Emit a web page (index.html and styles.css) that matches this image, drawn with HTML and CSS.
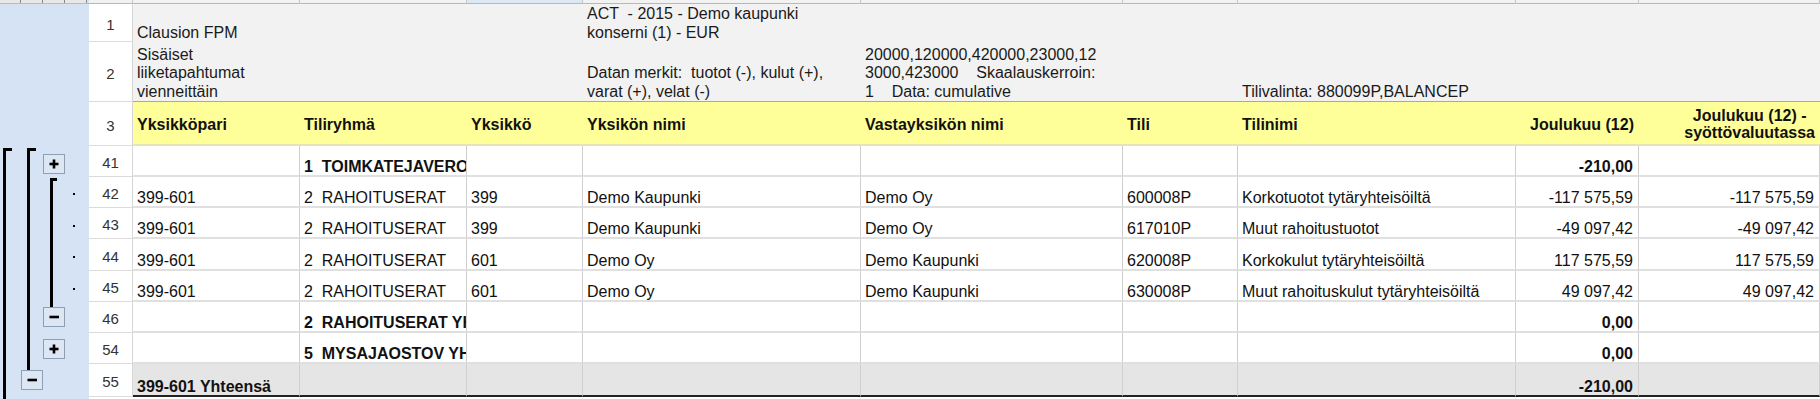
FILE: index.html
```html
<!DOCTYPE html>
<html lang="fi">
<head>
<meta charset="utf-8">
<title>Sisäiset liiketapahtumat</title>
<link rel="stylesheet" href="styles.css">
</head>
<body>
<div class="sheet">
  <div class="levels"><span></span><span></span><span></span><span></span></div>
  <div class="hd"></div><div class="hd"></div><div class="hd"></div><div class="hd sel"></div><div class="hd"></div><div class="hd"></div><div class="hd"></div><div class="hd"></div><div class="hd"></div><div class="hd"></div>

  <div class="outline">
    <svg width="89" height="395" viewBox="0 4 89 395" xmlns="http://www.w3.org/2000/svg">
      <g fill="#000">
        <rect x="3" y="148" width="3" height="251"/>
        <rect x="3" y="148" width="9" height="3"/>
        <rect x="27" y="148" width="3" height="222"/>
        <rect x="27" y="148" width="9" height="3"/>
        <rect x="50" y="178" width="3" height="129"/>
        <rect x="50" y="178" width="7" height="3"/>
        <rect x="73" y="193" width="2" height="2"/>
        <rect x="73" y="225" width="2" height="2"/>
        <rect x="73" y="256" width="2" height="2"/>
        <rect x="73" y="288" width="2" height="2"/>
      </g>
      <g fill="#dde7f4" stroke="#8e9eb5" stroke-width="1">
        <rect x="43.5" y="154.5" width="21" height="19"/>
        <rect x="43.5" y="307.5" width="21" height="19"/>
        <rect x="43.5" y="339.5" width="21" height="19"/>
        <rect x="21.5" y="370.5" width="21" height="19"/>
      </g>
      <g fill="#000">
        <rect x="49.5" y="162.7" width="9" height="2.6"/>
        <rect x="52.7" y="159.5" width="2.6" height="9"/>
        <rect x="49.5" y="315.7" width="9.5" height="2.6"/>
        <rect x="49.5" y="347.7" width="9" height="2.6"/>
        <rect x="52.7" y="344.5" width="2.6" height="9"/>
        <rect x="27.5" y="378.7" width="9.5" height="2.6"/>
      </g>
    </svg>
  </div>

  <!-- row 1 -->
  <div class="rn">1</div>
  <div class="c m">Clausion FPM</div>
  <div class="c m"></div>
  <div class="c m"></div>
  <div class="c m">ACT  - 2015 - Demo kaupunki<br>konserni (1) - EUR</div>
  <div class="c m"></div>
  <div class="c m"></div>
  <div class="c m"></div>
  <div class="c m"></div>
  <div class="c m"></div>

  <!-- row 2 -->
  <div class="rn">2</div>
  <div class="c m m2">Sisäiset<br>liiketapahtumat<br>vienneittäin</div>
  <div class="c m m2"></div>
  <div class="c m m2"></div>
  <div class="c m m2">Datan merkit:  tuotot (-), kulut (+),<br>varat (+), velat (-)</div>
  <div class="c m m2">20000,120000,420000,23000,12<br>3000,423000    Skaalauskerroin:<br>1    Data: cumulative</div>
  <div class="c m m2"></div>
  <div class="c m m2">Tilivalinta: 880099P,BALANCEP</div>
  <div class="c m m2"></div>
  <div class="c m m2"></div>

  <!-- row 3 -->
  <div class="rn">3</div>
  <div class="c h">Yksikköpari</div>
  <div class="c h">Tiliryhmä</div>
  <div class="c h">Yksikkö</div>
  <div class="c h">Yksikön nimi</div>
  <div class="c h">Vastayksikön nimi</div>
  <div class="c h">Tili</div>
  <div class="c h">Tilinimi</div>
  <div class="c h r">Joulukuu (12)</div>
  <div class="c h r"><span class="two">Joulukuu (12) -<br>syöttövaluutassa</span></div>

  <!-- row 41 -->
  <div class="rn">41</div>
  <div class="c"></div>
  <div class="c b">1  TOIMKATEJAVEROT YHTEENSÄ</div>
  <div class="c"></div>
  <div class="c"></div>
  <div class="c"></div>
  <div class="c"></div>
  <div class="c"></div>
  <div class="c r b">-210,00</div>
  <div class="c r"></div>

  <!-- row 42 -->
  <div class="rn">42</div>
  <div class="c">399-601</div>
  <div class="c">2  RAHOITUSERAT</div>
  <div class="c">399</div>
  <div class="c">Demo Kaupunki</div>
  <div class="c">Demo Oy</div>
  <div class="c">600008P</div>
  <div class="c">Korkotuotot tytäryhteisöiltä</div>
  <div class="c r">-117 575,59</div>
  <div class="c r">-117 575,59</div>

  <!-- row 43 -->
  <div class="rn">43</div>
  <div class="c">399-601</div>
  <div class="c">2  RAHOITUSERAT</div>
  <div class="c">399</div>
  <div class="c">Demo Kaupunki</div>
  <div class="c">Demo Oy</div>
  <div class="c">617010P</div>
  <div class="c">Muut rahoitustuotot</div>
  <div class="c r">-49 097,42</div>
  <div class="c r">-49 097,42</div>

  <!-- row 44 -->
  <div class="rn">44</div>
  <div class="c">399-601</div>
  <div class="c">2  RAHOITUSERAT</div>
  <div class="c">601</div>
  <div class="c">Demo Oy</div>
  <div class="c">Demo Kaupunki</div>
  <div class="c">620008P</div>
  <div class="c">Korkokulut tytäryhteisöiltä</div>
  <div class="c r">117 575,59</div>
  <div class="c r">117 575,59</div>

  <!-- row 45 -->
  <div class="rn">45</div>
  <div class="c">399-601</div>
  <div class="c">2  RAHOITUSERAT</div>
  <div class="c">601</div>
  <div class="c">Demo Oy</div>
  <div class="c">Demo Kaupunki</div>
  <div class="c">630008P</div>
  <div class="c">Muut rahoituskulut tytäryhteisöiltä</div>
  <div class="c r">49 097,42</div>
  <div class="c r">49 097,42</div>

  <!-- row 46 -->
  <div class="rn">46</div>
  <div class="c"></div>
  <div class="c b">2  RAHOITUSERAT YHTEENSÄ</div>
  <div class="c"></div>
  <div class="c"></div>
  <div class="c"></div>
  <div class="c"></div>
  <div class="c"></div>
  <div class="c r b">0,00</div>
  <div class="c r"></div>

  <!-- row 54 -->
  <div class="rn">54</div>
  <div class="c"></div>
  <div class="c b">5  MYSAJAOSTOV YHTEENSÄ</div>
  <div class="c"></div>
  <div class="c"></div>
  <div class="c"></div>
  <div class="c"></div>
  <div class="c"></div>
  <div class="c r b">0,00</div>
  <div class="c r"></div>

  <!-- row 55 -->
  <div class="rn">55</div>
  <div class="c tot b">399-601 Yhteensä</div>
  <div class="c tot"></div>
  <div class="c tot"></div>
  <div class="c tot"></div>
  <div class="c tot"></div>
  <div class="c tot"></div>
  <div class="c tot"></div>
  <div class="c tot r b">-210,00</div>
  <div class="c tot r"></div>
</div>
</body>
</html>
```

FILE: styles.css
```css
* { box-sizing: border-box; }

html, body {
  margin: 0;
  padding: 0;
  background: #fff;
  overflow: hidden;
}

.sheet {
  display: grid;
  grid-template-columns: 89px 44px 167px 167px 116px 278px 262px 115px 278px 123px 181px;
  grid-template-rows: 4px 38px 60px 44px 31px 31px 31px 32px 31px 31px 31px 33px 2px;
  font-family: "Liberation Sans", Arial, sans-serif;
  font-size: 16px;
  color: #111;
}

/* top strip (column headers, cut off) */
.levels {
  display: flex;
  background: #d5e3f5;
  border-bottom: 1px solid #b4bcc8;
}
.levels span {
  width: 22px;
  background: #e8e8e8;
  border-right: 1px solid #8a8a8a;
}
.levels span:first-child {
  width: 21px;
}
.hd {
  background: #f2f2f2;
  border-right: 1px solid #c8c8c8;
  border-bottom: 1px solid #b8b8b8;
}
.hd.sel {
  background: #dde8f5;
}

/* outline panel */
.outline {
  grid-column: 1;
  grid-row: 2 / -1;
  background: #d5e3f5;
  overflow: hidden;
}
.outline svg {
  display: block;
}

/* row numbers */
.rn {
  display: flex;
  align-items: center;
  justify-content: center;
  padding-top: 3px;
  font-size: 15px;
  color: #333;
  background: #fff;
  border-right: 1px solid #d6d6d6;
  border-bottom: 1px solid #dcdcdc;
}

/* cells */
.c {
  display: flex;
  align-items: flex-end;
  min-width: 0;
  padding: 0 4px;
  overflow: hidden;
  white-space: pre;
  line-height: 16px;
  border-right: 1px solid #cfcfcf;
  border-bottom: 2px solid #e0e0e0;
}
.c.r {
  justify-content: flex-end;
  padding-right: 5px;
}
.b {
  font-weight: bold;
}

/* report meta rows */
.m {
  background: #f2f2f2;
  border-right: none;
  border-bottom: none;
  line-height: 18.5px;
  color: #1a1a1a;
}
.m2 {
  border-bottom: 1px solid #a8a8a8;
}

/* header row */
.h {
  background: #ffff99;
  border-right: none;
  border-bottom: 2px solid #e6e6b4;
  align-items: center;
  font-weight: bold;
  line-height: 17px;
  padding-top: 2px;
}
.two {
  display: inline-block;
  text-align: center;
}

/* total row */
.tot {
  background: #e5e5e5;
  border-bottom: 2px solid #222;
}
```
